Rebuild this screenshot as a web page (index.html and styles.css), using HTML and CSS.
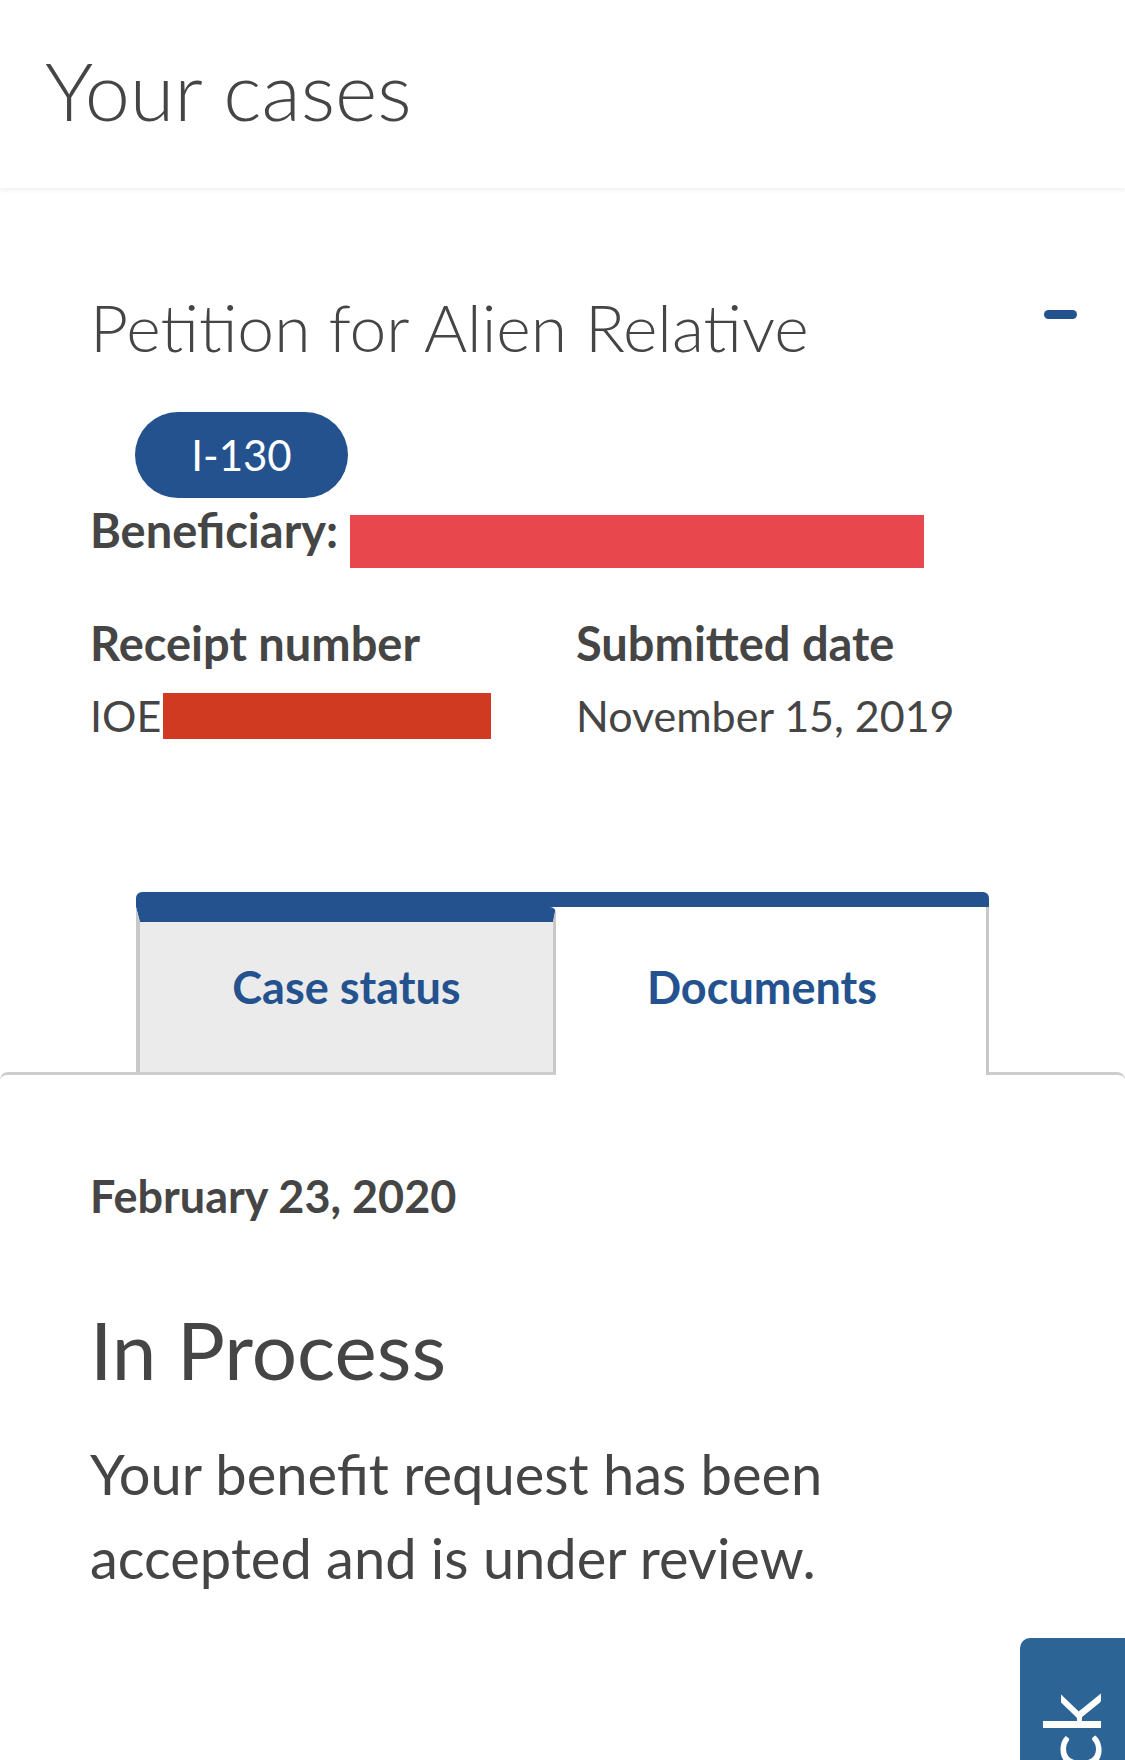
FILE: index.html
```html
<!DOCTYPE html>
<html lang="en">
<head>
    <meta charset="UTF-8">
    <meta name="viewport" content="width=device-width, initial-scale=1.0">
    <title>Your cases</title>
    <link rel="stylesheet" href="styles.css">
</head>
<body>
    <div class="page-head">
        <h1>Your cases</h1>
    </div>

    <div class="case">
        <div class="case-title">
            <h2>Petition for Alien Relative</h2>
            <button class="collapse" aria-label="Collapse"></button>
        </div>
        <span class="form-badge">I-130</span>
        <div class="beneficiary">
            <span class="label">Beneficiary:</span>
            <span class="redact redact-name"></span>
        </div>
        <div class="meta">
            <div>
                <div class="label">Receipt number</div>
                <div class="value">IOE<span class="redact redact-receipt"></span></div>
            </div>
            <div>
                <div class="label">Submitted date</div>
                <div class="value">November 15, 2019</div>
            </div>
        </div>
        <div class="tabs" role="tablist">
            <a class="tab" role="tab" href="#">Case status</a>
            <a class="tab active" role="tab" href="#">Documents</a>
        </div>
    </div>

    <div class="panel">
        <div class="status-date">February 23, 2020</div>
        <h3>In Process</h3>
        <p>Your benefit request has been accepted and is under review.</p>
    </div>

    <a class="feedback" href="#"><span>Feedback</span></a>
</body>
</html>
```

FILE: styles.css
```css
body { margin: 0; font-family: Lato, "Open Sans", sans-serif; color: #454545; background: #fff; }
.page-head { height: 188px; box-sizing: border-box; padding: 43px 0 0 45px; box-shadow: 0 2px 5px rgba(0,0,0,0.07); position: relative; }
h1 { margin: 0; font-size: 81px; font-weight: 300; line-height: 94px; }

.case { padding: 99px 48px 0 90px; }
.case-title { display: flex; justify-content: space-between; align-items: flex-start; }
h2 { margin: 0; font-size: 66px; font-weight: 300; line-height: 80px; }
.collapse { width: 33px; height: 9px; margin-top: 23px; padding: 0; border: none; border-radius: 5px; background: #23528f; }
.form-badge { display: inline-flex; align-items: center; justify-content: center; width: 213px; height: 86px; margin: 45px 0 0 45px; border-radius: 43px; background: #23528f; color: #fff; font-size: 42px; }

.label { font-weight: 700; font-size: 47px; line-height: 50px; }
.beneficiary { display: flex; align-items: flex-start; gap: 12px; margin-top: 7px; }
.redact { display: inline-block; }
.redact-name { width: 574px; height: 53px; margin-top: 10px; background: #e8474e; }
.redact-receipt { width: 328px; height: 46px; margin-left: 2px; vertical-align: -7px; background: #cf3a20; }

.meta { display: grid; grid-template-columns: 486px 1fr; margin-top: 50px; }
.value { margin-top: 20px; font-size: 43px; line-height: 56px; }

.tabs { display: flex; margin: 148px 88px -3px 46px; border-top: 15px solid #23528f; border-radius: 6px 6px 0 0; position: relative; z-index: 1; }
.tab { display: block; flex: 0 0 420px; box-sizing: border-box; height: 165px; padding-top: 40px; border-left: 4px solid #c8c8c8; border-right: 3px solid #c8c8c8; border-top: 15px solid #23528f; border-radius: 0 6px 0 0; background: #ebebeb; color: #23528f; font-weight: 700; font-size: 45px; line-height: 50px; text-align: center; text-decoration: none; }
.tab.active { flex: 1; height: 168px; padding: 55px 18px 0 0; border-left: none; border-top: none; border-radius: 0; background: #fff; }

.panel { padding: 94px 0 91px 90px; border-top: 3px solid #cdcdcd; border-radius: 8px 8px 0 0; box-shadow: 0 4px 4px -1px rgba(0,0,0,0.35); }
.status-date { font-weight: 700; font-size: 45px; line-height: 54px; }
h3 { margin: 81px 0 0; font-size: 80px; font-weight: 400; line-height: 90px; }
.panel p { max-width: 760px; margin: 38px 0 0; font-size: 56px; line-height: 84px; }

.feedback { position: fixed; top: 1638px; right: 0; width: 105px; height: 400px; border-radius: 10px 0 0 0; background: #2c6496; color: #fff; text-decoration: none; z-index: 2; }
.feedback span { position: absolute; left: 10px; top: 55px; writing-mode: vertical-rl; transform: rotate(180deg); font-size: 80px; line-height: 80px; }
```
